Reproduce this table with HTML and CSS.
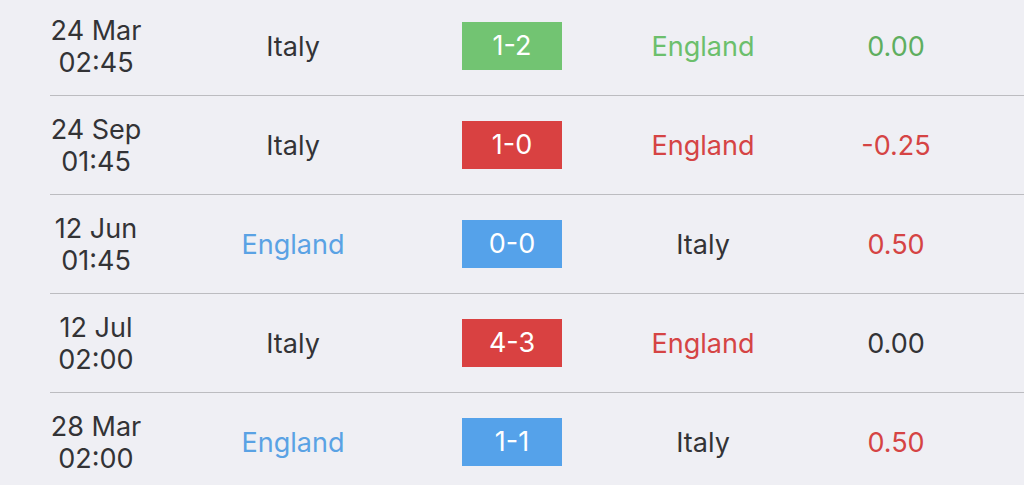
FILE: index.html
```html
<!DOCTYPE html>
<html lang="en">
<head>
    <meta charset="utf-8" />
    <title>Head to head</title>
    <link rel="stylesheet" href="styles.css">
</head>
<body>
    <ul class="matches">
        <li class="match">
            <div class="date">24 Mar<br>02:45</div>
            <div class="team">Italy</div>
            <div class="score"><span class="box win">1-2</span></div>
            <div class="team win-text">England</div>
            <div class="odds win-text">0.00</div>
        </li>
        <li class="match">
            <div class="date">24 Sep<br>01:45</div>
            <div class="team">Italy</div>
            <div class="score"><span class="box loss">1-0</span></div>
            <div class="team loss-text">England</div>
            <div class="odds loss-text">-0.25</div>
        </li>
        <li class="match">
            <div class="date">12 Jun<br>01:45</div>
            <div class="team draw-text">England</div>
            <div class="score"><span class="box draw">0-0</span></div>
            <div class="team">Italy</div>
            <div class="odds loss-text">0.50</div>
        </li>
        <li class="match">
            <div class="date">12 Jul<br>02:00</div>
            <div class="team">Italy</div>
            <div class="score"><span class="box loss">4-3</span></div>
            <div class="team loss-text">England</div>
            <div class="odds">0.00</div>
        </li>
        <li class="match">
            <div class="date">28 Mar<br>02:00</div>
            <div class="team draw-text">England</div>
            <div class="score"><span class="box draw">1-1</span></div>
            <div class="team">Italy</div>
            <div class="odds loss-text">0.50</div>
        </li>
    </ul>
</body>
</html>
```

FILE: styles.css
```css
body {
    margin: 0;
    background-color: #efeff4;
    font-family: Inter, Roboto, "Liberation Sans", sans-serif;
    color: #333336;
    overflow: hidden;
}

ul {
    list-style: none;
    margin: 0;
    padding: 0;
}

.matches {
    margin-top: -3px;
}

.match {
    display: grid;
    grid-template-columns: 92px 302px 136px 246px 140px;
    align-items: center;
    height: 98px;
    margin-left: 50px;
    border-bottom: 1px solid #bcbcc0;
    font-size: 27px;
    text-align: center;
}

    .match .date {
        line-height: 32px;
        white-space: nowrap;
        padding-top: 2px;
    }

    .match .score {
        display: flex;
        justify-content: center;
    }

        .match .score .box {
            width: 100px;
            height: 48px;
            line-height: 48px;
            color: #fff;
        }

.box.win {
    background-color: #72c472;
}

.box.loss {
    background-color: #d94141;
}

.box.draw {
    background-color: #55a2ea;
}

.win-text {
    color: #6cbf6c;
}

.odds.win-text {
    color: #5fae5f;
}

.loss-text {
    color: #d54444;
}

.draw-text {
    color: #5aa2e4;
}
```
